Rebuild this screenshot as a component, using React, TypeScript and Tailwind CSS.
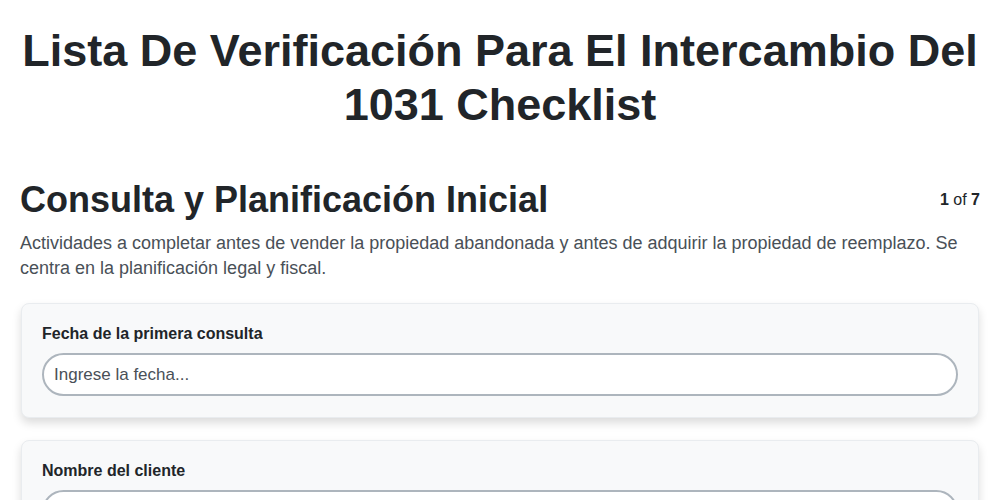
export default function App() {
  const fields = [
    { label: "Fecha de la primera consulta", placeholder: "Ingrese la fecha..." },
    { label: "Nombre del cliente", placeholder: "Ingrese el nombre..." },
  ];
  return (
    <div className="min-h-screen bg-white text-[#212529]" style={{ fontFamily: '"Liberation Sans", Arial, sans-serif' }}>
      <div className="px-5 pt-6">
        <h1 className="text-center text-[45px] font-bold leading-[54px]">
          Lista De Verificación Para El Intercambio Del 1031 Checklist
        </h1>
        <div className="mt-[48px] flex items-center justify-between">
          <h2 className="text-[36px] font-bold leading-[40px]">Consulta y Planificación Inicial</h2>
          <div className="text-base">
            <span className="font-bold">1</span> of <span className="font-bold">7</span>
          </div>
        </div>
        <p className="mt-[11px] text-lg leading-[25px] text-[#495057]">
          Actividades a completar antes de vender la propiedad abandonada y antes de adquirir la propiedad de reemplazo. Se centra en la planificación legal y fiscal.
        </p>
        <div className="mt-[22px] flex flex-col gap-[22px] px-px">
          {fields.map((f) => (
            <div key={f.label} className="rounded-lg border border-[#e9ecef] bg-[#f8f9fa] px-5 pt-[18px] pb-[21px] shadow-[0_5px_10px_rgba(0,0,0,0.14)]">
              <label className="block text-base font-bold leading-6">{f.label}</label>
              <input
                className="mt-[7px] block h-[43px] w-full rounded-full border-2 border-[#adb5bd] bg-white px-[10px] text-[17px] text-[#212529] placeholder:text-[#495057] outline-none"
                placeholder={f.placeholder}
              />
            </div>
          ))}
        </div>
      </div>
    </div>
  );
}
